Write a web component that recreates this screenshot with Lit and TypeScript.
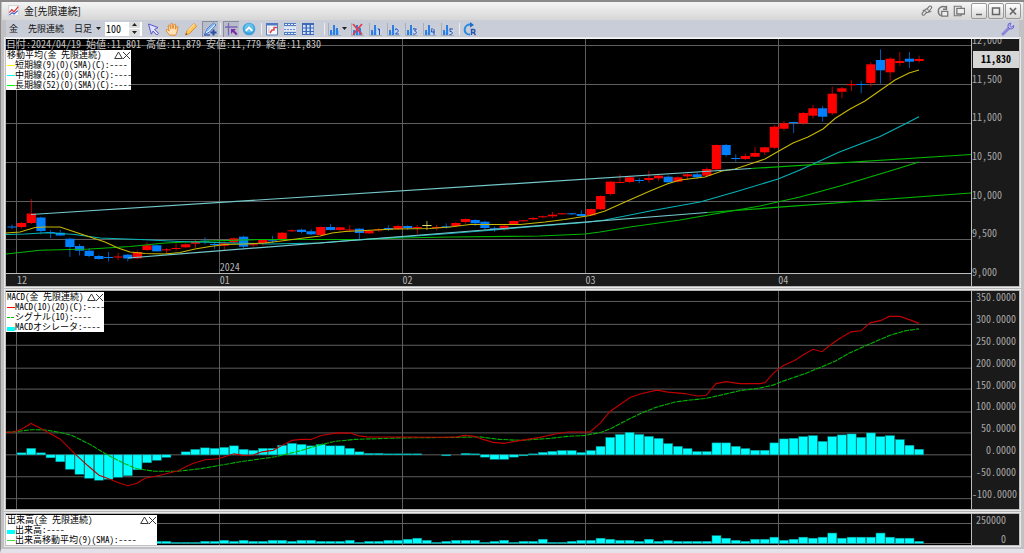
import { LitElement, html, svg, css } from "lit";
import { customElement, state } from "lit/decorators.js";

type Candle = [string, number, number, number, number];

const STEP = 9.65;
const FIRST = 12;
const slot = (i: number) => FIRST + STEP * i;

// colour, body top, body bottom, wick top, wick bottom
const CANDLES: Candle[] = [
  ["b", 226.5, 227.5, 224.5, 229], ["r", 223, 227, 222, 228.5], ["r", 213.5, 223, 199, 224],
  ["b", 217.5, 231, 216.7, 234.5], ["b", 232, 233, 230, 238], ["b", 232.7, 235.5, 230, 236],
  ["b", 238.7, 247, 237.7, 257], ["b", 246, 250.7, 244, 255.5], ["b", 250.7, 256, 248, 257],
  ["b", 256, 259, 254.7, 259.7], ["b", 257, 258, 252, 261.5], ["r", 256.5, 257.5, 252.7, 260],
  ["b", 254.7, 258.5, 254, 261.5], ["r", 252, 258.3, 250.7, 259], ["r", 245.3, 250, 242.3, 251],
  ["b", 245.3, 251.3, 245, 251.5], ["r", 249.3, 250.3, 248, 254], ["r", 248, 249, 243.5, 250.5],
  ["r", 244.3, 247.3, 243.3, 248.3], ["r", 241.7, 243.7, 240, 248], ["b", 240.7, 241.7, 237.3, 244.3],
  ["b", 244, 245, 242.5, 249], ["r", 243.3, 245.7, 241.3, 250], ["r", 238.3, 242.3, 237.3, 243.3],
  ["b", 236.7, 246.7, 235.7, 248.3], ["r", 244.3, 245.3, 242.7, 246.7], ["r", 240, 243, 239.3, 245.7],
  ["b", 240.3, 241.3, 235.7, 243.3], ["r", 232.7, 239, 232, 240], ["r", 230.3, 231.3, 229.3, 232],
  ["b", 229.7, 232, 228.7, 233.3], ["b", 231.3, 234.3, 229.3, 235], ["r", 227, 235, 226.5, 235.7],
  ["b", 227, 230, 224, 230.5], ["r", 227.3, 230, 227, 231.7], ["r", 229.5, 230.5, 225.3, 231.7],
  ["b", 228.7, 233, 228, 239], ["r", 230.7, 233.3, 230, 234], ["r", 229.3, 230.3, 228.3, 231.7],
  ["b", 228, 229.7, 225.3, 231], ["r", 226, 229, 224.7, 230], ["b", 226, 228, 225.3, 230],
  ["r", 227, 228, 225, 233.7], ["y", 225, 226, 221, 230], ["r", 227, 228, 225, 230],
  ["b", 226.3, 227.3, 223.3, 228.7], ["r", 223, 226, 222, 227.3], ["r", 219, 222, 218.5, 223.5],
  ["b", 220, 223.3, 219.3, 226], ["b", 221.7, 228, 220.7, 230], ["b", 228.3, 229.3, 226.7, 231.7],
  ["r", 225.7, 229.3, 224.7, 231.3], ["r", 221, 224.7, 220.5, 225], ["r", 220.3, 221.3, 220, 221.5],
  ["r", 218, 219.3, 217, 220], ["r", 216.3, 217.3, 215.5, 218], ["r", 214.7, 216.3, 212, 218],
  ["r", 213.3, 214.3, 213, 214.5], ["b", 213.3, 214.3, 213, 215], ["b", 214, 216, 210.3, 216.7],
  ["r", 209, 215.3, 208.5, 215.5], ["r", 196, 209.3, 195.5, 210], ["r", 181.7, 194, 181, 195.5],
  ["r", 182, 183, 174.3, 183.3], ["r", 177.3, 182, 176.7, 183], ["b", 180, 181, 178.3, 183.3],
  ["r", 178, 180, 171, 182.7], ["r", 175.7, 178.3, 175, 180.7], ["b", 176.7, 182.3, 175.3, 183.3],
  ["r", 177.3, 181.7, 176.5, 182.5], ["r", 174.3, 176.3, 173.5, 180], ["b", 174.3, 177.3, 172.7, 179],
  ["r", 169, 175.7, 167.3, 176], ["r", 145, 169.3, 144.5, 170], ["b", 145, 155, 144, 156.7],
  ["b", 158, 159, 154.3, 161.7], ["r", 156, 159, 153.7, 160], ["r", 153, 156.7, 147, 157],
  ["r", 147.3, 152.3, 146.7, 155], ["r", 126.7, 147.7, 125, 149.3], ["r", 123.3, 128.7, 121, 130.7],
  ["b", 122, 123, 121.7, 133], ["r", 113, 123.3, 112, 125], ["r", 108.3, 115.7, 105, 118.3],
  ["b", 108.3, 116.7, 106, 121.7], ["r", 93.7, 113.3, 86.7, 115], ["r", 88.3, 91.7, 87, 98.3],
  ["r", 84, 85.3, 80.3, 91], ["b", 84, 85, 81.3, 93.3], ["r", 64.3, 83, 62, 86.7],
  ["b", 60, 70.3, 49.3, 83.7], ["r", 58.7, 72.3, 57.3, 80.7], ["r", 61, 63, 52, 66],
  ["b", 58.7, 61.7, 52, 68], ["r", 59, 61, 55.7, 62.5],
];

const OSC_ZERO = 455.5;
const OSC: number[] = [
  0, 2, 6.5, 2, -3, -7, -14.5, -19.5, -23.5, -25.5, -24.5, -22.5, -21, -15, -8, -5.5, -2.5, 0,
  3, 5.5, 7, 6.5, 7.5, 9, 5.5, 4.5, 6.5, 6.5, 9.5, 11.5, 10.5, 9, 10.5, 9, 9, 6.5, 3, 1.5, 1.5,
  1, 1, 1, 1, 0, 0, -1, 0, 1.5, 1, -2.3, -4.5, -4.5, -2.3, -1, 1, 2.5, 3.5, 4.3, 4.3, 2.3, 4.3,
  8.5, 17.5, 20.5, 22.5, 20.5, 18.5, 16.5, 11.3, 8.5, 6.3, 3.3, 3.3, 12, 12, 8.5, 6.3, 4.6, 4.6,
  12, 16, 16.6, 18.3, 19.3, 13.5, 18.3, 20, 21, 17.6, 22, 18.3, 19.3, 15.3, 9.6, 5.6,
];

const VOL_ZERO = 543.5;
const VOL: number[] = [
  2, 3, 4, 3, 3, 2, 4, 3, 3, 3, 2, 3, 3, 3, 2, 2, 2, 1, 1, 1, 2, 2, 3, 2, 3, 2, 2, 3, 3, 2, 3, 3,
  2, 2, 2, 3, 1, 2, 2, 3, 3, 4, 5, 3, 1, 2, 3, 3, 3, 1, 2, 3, 1, 2, 2, 4, 1, 1, 2, 3, 3, 5, 4, 3,
  3, 2, 4, 2, 3, 2, 2, 2, 2, 7.5, 5, 3, 2, 4, 4, 6, 3, 4, 6, 5, 6, 10, 5, 6, 6, 6, 10, 6, 5, 5, 2,
];

const MA_SHORT =
  "6,233 20,232 35,227.5 45,227 60,227 72,231 90,237 105,242 118,248 130,252 145,253.5 165,254 180,252.5 195,249 210,246.5 225,244.5 245,244 265,243 285,240.5 300,238.5 320,236 332,233 345,231.5 365,230.5 395,229 430,228.5 450,227 470,224.5 520,224.5 545,222 565,219.5 590,215.5 605,211 625,202 650,191 667,184 680,180 697,178 705,177 722,171 735,169 750,164 765,159 778,151.5 793,143 808,137 823,129 835,118.5 850,109 865,101 880,90.5 895,80 909,73 919,70";
const MA_MID =
  "6,234.5 25,234 45,232.7 60,233.5 75,234.5 100,238 140,239.5 180,241.5 215,242.5 270,244 320,243 350,240.5 380,238.5 402,237 450,233.5 500,229.5 540,226 585,222.5 605,220 650,211 700,202 735,192 778,179 800,170 840,151.7 880,136.5 905,124 919,116.7";
const MA_LONG =
  "6,254 20,252.5 40,250.3 90,249 130,246.5 165,243 210,241 260,239.5 360,239.5 400,238 450,237 540,236 585,234 600,232 630,227 680,220 720,213 760,206 800,197 840,186 890,171 919,162";
const MACD =
  "6,433 14,432.5 22,429.5 31,424 41,429 60,439.5 76,455.5 88,466.5 99,476 110,480 120,484 128,486.5 137,484 145,479 160,476 178,471.5 192,464.5 205,460.5 218,459.5 234,454.5 243,456 253,455.7 262,452.5 273,451 283,445.5 292,441 301,440 311,440 321,436 337,433.5 351,433.7 359,436.5 367,437.5 440,437.8 457,437.5 465,436 475,437 483,440 493,443 504,444 515,442 540,438 555,434.5 568,432.5 590,432.5 600,424 610,412 630,398 640,394.5 657,390.5 668,392.5 685,394 697,396.5 706,396 716,384 726,382 740,384 760,384 765,383 774,373 783,366 795,360.5 805,354 813,349.5 822,352 832,344 840,338.5 851,332 861,331 870,323 881,320.5 889,316.5 900,316.5 910,320 919,323.5";
const SIGNAL =
  "6,433 18,432 31,430.3 45,430.5 60,433 72,436 90,445 108,456 125,464.5 137,469.5 155,472 178,472 200,469.5 220,466 240,462.5 275,457.5 300,451.5 320,445.5 335,442 355,440 400,438.5 455,438 480,437.5 500,440 520,441 550,439 567,437 585,436 601,433 612,428.5 630,419 645,412 657,407.5 675,402.5 690,400.5 705,399 730,393.5 740,391 757,389 773,385.5 783,381.5 805,374 822,367 835,361.5 850,353 870,344 890,335.5 905,331 919,329";

const MONTHS_X = [16.5, 219.5, 402.5, 585.5, 778.5];
const PRICE_Y = [45.5, 84.5, 123.5, 162.5, 201.5, 239.5];
const MACD_Y = [301.5, 324.5, 345.5, 368.5, 389.5, 412.5, 433.5, 455.5, 477.5, 499.5];

const PRICES = ["12,000", "11,500", "11,000", "10,500", "10,000", "9,500", "9,000"];
const LEVELS = [
  "350.0000", "300.0000", "250.0000", "200.0000", "150.0000",
  "100.0000", "50.0000", "0.0000", "-50.0000", "-100.0000",
];

const gridLines = (ys: number[], top: number, bottom: number) => svg`
  ${ys.map((y) => svg`<line class="grid" x1="6" x2="971" y1=${y} y2=${y}></line>`)}
  ${MONTHS_X.map((x) => svg`<line class="grid" x1=${x} x2=${x} y1=${top} y2=${bottom}></line>`)}`;

const barsBehind = (badge: unknown) => svg`
  <path d="M1.5 1v12.5H14" fill="none" stroke="#a9adb5"></path>
  <path d="M3 8h2v5H3zM6 3h2v10H6zM9 6h2v7H9z" fill="#2f7fe0"></path>
  <path d="M5 10h1v3H5zM8 7h1v6H8zM11 9h1v4h-1z" fill="#8cc0f6"></path>${badge}`;

const chartBadge = (path: string) =>
  barsBehind(svg`<path d="M8.500 6.500h5.500v6.500H8.500z" fill="#c6d6ee"></path><path d=${path} fill="none" stroke="#2c4ea0"></path>`);

const ICONS: Record<string, unknown> = {
  pointer: svg`<path d="M2.5 2 12 5.5 8.6 7.4 12.5 11.3 10.8 13 7 9.1 5.3 12.2z" fill="#dfe3ff" stroke="#5a55c8"></path>`,
  hand: svg`<path d="M4.6 13.2C3.4 11.4 1.2 9.3 1.2 8.2c0-.9 1.2-1 1.900-.2l1 1.1L3.2 4c-.2-1.200 1.200-1.500 1.600-.4l1 3.200.1-4.600c0-1.200 1.600-1.200 1.700 0l.3 4.500L9.100 2.700c.3-1.100 1.700-.8 1.600.3l-.4 4.300 1.200-2.500c.5-1 1.700-.5 1.400.6-.6 2.400-.9 5.600-2.300 7.800z" fill="#ffe2b8" stroke="#e0892e"></path>`,
  pencil: svg`<path d="m1.500 13 1.300-4L10 1.500 12.700 4 5.500 11.600z" fill="#ffc45c" stroke="#dc9130"></path><path d="m1.500 13 .6-2 1.300 1.300z" fill="#604020"></path><path d="m4 8.500 6.500-6.600" stroke="#fff0c0"></path>`,
  draw: svg`<path d="M1.500 12.500 4 7l6.500-6 2.500 2-6.500 7z" fill="#dcecff" stroke="#3f78d0"></path><path d="M4 9 11 2" stroke="#7eb0ee" stroke-width="1.500"></path><path d="M1 13h6" stroke="#2a55b0" stroke-width="1.300" fill="none"></path><path d="M10.500 7.500v6M7.500 10.500h6" stroke="#2a4fa8" stroke-width="2"></path>`,
  cross: svg`<path d="M1 5h12.500M4.500 1v12.500" stroke="#7a66b8" stroke-width="1.300"></path><path d="M7 7h5L10.400 8.600 13.500 11.700 12 13.200 8.800 10 7 12z" fill="#7a2fa8"></path>`,
  up: svg`<circle cx="7" cy="7" r="6.300" fill="#3fa2dc"></circle><circle cx="7" cy="6" r="4.600" fill="#66c0ee"></circle><path d="M3.600 8.800 7 5.600l3.400 3.200" fill="none" stroke="#fff" stroke-width="1.800"></path>`,
  newchart: svg`<path d="M1.500 1.500h11v11.500h-11z" fill="#f4f8ff" stroke="#5a7cb8"></path><path d="M1 1h12v2.500H1z" fill="#4f78c0"></path><path d="M5 11 7 8h2V5.500h3" fill="none" stroke="#e04848" stroke-width="1.500"></path><path d="M4 5v6" stroke="#e8b0b0"></path>`,
  rows: svg`<path d="M1 1h12v3H1zM1 10h12v3H1z" fill="#4f7cc2"></path><path d="M1 4.500h12v5H1z" fill="#dfe9f8"></path><path d="M2 2.500h11M2 11.500h11" stroke="#e6f0ff" stroke-dasharray="2 1"></path><path d="M1 7.500h12" stroke="#6b8cc4" stroke-dasharray="2 1"></path>`,
  table: svg`<path d="M1 1h12v12H1z" fill="#3f68b8"></path><path d="M2 3h2.500v2.500H2zM6 3h2.500v2.500H6zM10 3h2.500v2.500H10zM2 6.500h2.500V9H2zM6 6.500h2.500V9H6zM10 6.500h2.500V9H10zM2 10h2.500v2H2zM6 10h2.500v2H6zM10 10h2.500v2H10z" fill="#cfe2fb"></path>`,
  bars: barsBehind(null),
  barsx: barsBehind(svg`<path d="m3 2 9 10.500M12 2 3 12.500" stroke="#e03c4c" stroke-width="1.700"></path>`),
  bars1: chartBadge("M10 8l1.500-1v6"),
  bars2: chartBadge("M9 8c2-2 4 0 3 1.500L9.500 12H13"),
  bars3: chartBadge("M9 7h3.500L10.500 9c3 0 2.500 4-1.500 3"),
  bars4: chartBadge("M10 6.500 9.500 10H13M12 7v6"),
  bars5: chartBadge("M13 7h-3v2.500c3-.5 3.500 3.500-.5 3"),
  refresh: svg`<path d="M7 12.600A5 5 0 1 1 8 2.800" fill="none" stroke="#2a8ae0" stroke-width="2"></path><path d="M7 0v5.600L11 3z" fill="#1c6cc8"></path><path d="M8.500 13V7.500h2a1.500 1.500 0 0 1 0 3h-2M10.500 10.500l2 2.500" fill="none" stroke="#2858b0" stroke-width="1.400"></path>`,
  wrench: svg`<path d="m2 12 6-6" stroke="#8a86dc" stroke-width="3" stroke-linecap="round"></path><path d="M12.800 3.500A3 3 0 1 1 9.800 1L9 3.600 10.500 5z" fill="#b9b6f4" stroke="#6a66cc"></path>`,
  link: svg`<g fill="none" stroke="#777" stroke-width="1.300"><path d="M6.500 8.500 4 11.500c-1.500 1.200-3.500-.5-2.300-2.300L5.500 5c1.500-1 3 0 3 1.500M7 4.500l2.800-3c1.700-1 3.400.7 2.300 2.300L8.500 8.500c-1.500 1-3 .2-3-1.500M2 6.500l4-1M8 8.500l4-1"></path></g>`,
  undock: svg`<path d="M10.500 2.500C6 .5 1.500 3 1.500 7s2 5 3 5.500M11 1v4H7" fill="none" stroke="#777" stroke-width="1.700"></path><path d="M5.500 7.500h7V13h-7z" fill="#eee" stroke="#777" stroke-width="1.500"></path>`,
  window: svg`<path d="M1.500 1.500h8v11h-8z" fill="none" stroke="#777" stroke-width="1.300"></path><path d="M4.500 4h9v6.500h-9z" fill="#eee" stroke="#777" stroke-width="1.500"></path>`,
  min: svg`<path d="M4 10.500h6" stroke="#666" stroke-width="1.500"></path>`,
  max: svg`<path d="M3.500 4h7v6.500h-7z" fill="none" stroke="#666" stroke-width="1.500"></path>`,
  close: svg`<path d="m4 4 6 6.500M10 4l-6 6.500" stroke="#666" stroke-width="1.700"></path>`,
  app: svg`<path d="M.5.500h12v12H.5z" fill="#f8f8fa" stroke="#c9c9d2"></path><path d="M1.500 9 4.500 5.500 7 8l5-6" fill="none" stroke="#e03030" stroke-width="1.400"></path><path d="M1.500 11.500 5 9l2 1.500 4.500-4" fill="none" stroke="#4060c8" stroke-width="1.200"></path>`,
};

const icon = (name: string) => html`<svg class="icon" viewBox="0 0 14 14" aria-hidden="true">${ICONS[name]}</svg>`;

const KEYS: Record<string, string> = {
  line: "M0 4h8v1H0z",
  dash: "M0 4h3v1H0zM4 4h3v1H4z",
  bar: "M0 4h8v4H0z",
};

@customElement("app-root")
export class AppRoot extends LitElement {
  static styles = css`
    :host {
      display: block;
      height: 100vh;
      min-height: 320px;
      font-family: "Noto Sans CJK JP", sans-serif;
      font-size: 10px;
      line-height: 12px;
      color: #111;
    }
    * { box-sizing: border-box; }
    .window {
      height: 100%;
      display: flex;
      flex-direction: column;
      padding: 0 5px 4px;
      background: #c1c1c3;
      border-top: 2px solid #8a8889;
      border-left: 1px solid #8a8889;
      border-bottom: 4px solid #e3e2ea;
      overflow: hidden;
    }
    button {
      display: inline-flex;
      align-items: center;
      justify-content: center;
      width: 16px;
      height: 16px;
      padding: 0;
      border: 0;
      background: none;
      font: inherit;
    }
    .icon { width: 14px; height: 14px; display: block; flex: none; }
    .titlebar {
      flex: none;
      height: 18px;
      margin: 0 -4px;
      padding: 0 2px 0 6px;
      display: flex;
      align-items: center;
      gap: 4px;
      background: linear-gradient(#f4f4f4, #d6d6d6);
    }
    h1 { margin: 0; font-size: 10px; font-weight: 400; flex: 1; }
    .titlebar .icon { width: 12px; height: 12px; }
    .framed {
      width: 16px;
      height: 16px;
      border: 1px solid #999;
      border-radius: 2px;
      background: linear-gradient(#fff, #d8d8d8);
    }
    .framed .icon { width: 14px; height: 14px; }
    .tools, .winbuttons { display: flex; align-items: center; }
    .winbuttons { gap: 1px; }
    .toolbar {
      flex: none;
      height: 17px;
      padding: 0 3px;
      display: flex;
      align-items: center;
      font-size: 9px;
      background: #c9cdd8;
    }
    .label { margin-right: 10px; }
    .period {
      appearance: none;
      border: 0;
      background: none;
      font: inherit;
      color: inherit;
      padding: 0;
      width: 22px;
    }
    .caret { width: 5px; height: 3px; display: block; flex: none; }
    .count {
      display: flex;
      width: 37px;
      height: 14px;
      margin: 0 3px 0 4px;
      background: #fff;
    }
    .count input {
      width: 24px;
      border: 0;
      padding: 0 0 0 1px;
      background: none;
      font: inherit;
      font-size: 10px;
      font-feature-settings: "hwid";
      appearance: textfield;
    }
    .count input::-webkit-inner-spin-button { display: none; }
    .spin { display: flex; flex-direction: column; gap: 1px; width: 12px; }
    .spin button { width: 11px; height: 7px; background: #dcdcdc; border-radius: 1px; }
    .group { display: flex; gap: 2px; align-items: center; margin-right: 2px; }
    .group.first { gap: 3px; margin-right: 0; }
    .group.wide { margin-right: 6px; }
    .sep { width: 1px; height: 12px; margin: 0 2px; background: #eceef4; }
    .pressed { background: #b9bdca; box-shadow: inset 1px 1px #8b8e99; }
    .menu { width: 20px; gap: 1px; }
    .spring { flex: 1; }

    .panels {
      flex: 1;
      min-height: 0;
      display: grid;
      grid-template-rows: 248fr 219fr 31fr;
      row-gap: 5px;
      border-top: 2px solid #f4f6fa;
      background: #b4b4b4;
    }
    .panel {
      position: relative;
      min-height: 0;
      display: grid;
      grid-template-columns: minmax(0, 1fr) 47px;
      outline: 1px solid #e9e9ea;
      outline-offset: 1px;
    }
    .plot {
      position: relative;
      min-height: 0;
      min-width: 0;
      display: flex;
      flex-direction: column;
      background: #000;
      border-right: 1px solid #bdbdbd;
      font-feature-settings: "hwid";
    }
    .chart { display: block; width: 100%; flex: 1; min-height: 0; }
    .grid { stroke: #5e5e5e; stroke-width: 1; shape-rendering: crispEdges; }
    .line { fill: none; stroke-width: 1.1; }
    .short { stroke: #c8b800; }
    .mid { stroke: #00b4b8; }
    .long { stroke: #00b800; }
    .trend { stroke: #74c8cc; stroke-width: 1.2; }
    .extend { stroke: #00b800; stroke-width: 1.2; }
    .macd { stroke: #c00000; }
    .signal { stroke: #00b400; stroke-dasharray: 5 1; }
    .r { fill: #ff0000; stroke: #ff0000; }
    .b { fill: #0080ff; stroke: #0080ff; }
    .y { fill: #e4e46a; stroke: #e4e46a; }
    .wick { stroke-width: 1; opacity: 0.7; }
    .body { stroke: none; }
    .bar { fill: #00ffff; stroke: #008a8a; stroke-width: 0.5; }
    .months {
      flex: none;
      height: 13px;
      display: grid;
      grid-template-columns: 11fr 203fr 183fr 183fr 193fr 193fr;
      background: #1a1a1a;
      border-top: 1px solid #bdbdbd;
      color: #b4b4b4;
    }
    .month { position: relative; }
    .year { position: absolute; left: 0; top: -13px; }
    .axis {
      min-height: 0;
      overflow: hidden;
      background: #1a1a1a;
      color: #a8a8a8;
      font-feature-settings: "hwid";
    }
    .scale {
      margin: 0;
      padding: 0;
      list-style: none;
      height: 100%;
      display: flex;
      flex-direction: column;
      justify-content: space-between;
    }
    .prices { margin-top: -5px; padding-bottom: 8px; height: calc(100% + 5px); }
    .levels { padding: 0 3px 9px 0; text-align: right; }
    .volumes { padding-right: 13px; text-align: right; }
    .last {
      position: absolute;
      right: 0;
      top: 12px;
      width: 46px;
      height: 17px;
      line-height: 15px;
      padding-right: 8px;
      text-align: right;
      background: #d6d6d6;
      color: #000;
      font-weight: 700;
      font-feature-settings: "hwid";
    }
    .info { position: absolute; left: 0; top: 0; line-height: 10px; color: #c8c8c8; white-space: nowrap; }
    .legend {
      position: absolute;
      left: 0;
      top: 1px;
      padding: 0 1px;
      background: #fff;
      color: #000;
      font-size: 9px;
      line-height: 10px;
      white-space: nowrap;
      width: 98px;
    }
    .legend.price { top: 11px; width: 125px; }
    .legend.volume { width: 151px; }
    .legend header { display: flex; justify-content: space-between; }
    .legend ul { margin: 0; padding: 0; list-style: none; }
    .legend li { display: flex; align-items: center; }
    .legend button { width: 8px; height: 10px; }
    .legend button svg { width: 9px; height: 9px; flex: none; }
    .actions { display: flex; }
    .key { width: 8px; height: 8px; flex: none; }
  `;

  @state() private count = 100;

  private tool(name: string, label: string, extra = "") {
    return html`<button class=${extra} aria-label=${label} title=${label}>${icon(name)}</button>`;
  }

  private legend(kind: string, title: string, items: [string, string, string][]) {
    return html`<section class="legend ${kind}">
      <header>
        <span>${title}</span>
        <span class="actions">
          <button aria-label="折りたたむ"><svg viewBox="0 0 9 9"><path d="M.7 7.500h7.600L4.500 1z" fill="none" stroke="#222" stroke-width=".9"></path></svg></button>
          <button aria-label="閉じる"><svg viewBox="0 0 9 9"><path d="m1 1 7 7M8 1 1 8" stroke="#222" stroke-width=".9"></path></svg></button>
        </span>
      </header>
      <ul>
        ${items.map(([shape, color, text]) => html`<li>
          <svg class="key" viewBox="0 0 8 8" aria-hidden="true"><path d=${KEYS[shape]} fill=${color}></path></svg>
          <span>${text}</span>
        </li>`)}
      </ul>
    </section>`;
  }

  private bars(values: number[], zero: number) {
    return values.map((v, i) =>
      v === 0
        ? null
        : svg`<rect class="bar" x=${(slot(i) - 4.5).toFixed(1)} width="9" y=${v > 0 ? zero - v : zero} height=${Math.abs(v)}></rect>`);
  }

  render() {
    return html`
      <main class="window">
        <div class="titlebar">
          ${icon("app")}
          <h1>金[先限連続]</h1>
          <div class="tools">
            ${this.tool("link", "連動")}${this.tool("undock", "切り離す")}${this.tool("window", "複製")}
          </div>
          <div class="winbuttons">
            ${this.tool("min", "最小化", "framed")}${this.tool("max", "最大化", "framed")}${this.tool("close", "閉じる", "framed")}
          </div>
        </div>

        <div class="toolbar">
          <span class="label">金</span>
          <span class="label">先限連続</span>
          <select class="period" aria-label="足種"><option>日足</option></select>
          <svg class="caret" viewBox="0 0 5 3" aria-hidden="true"><path d="M0 0h5L2.500 3z" fill="#222"></path></svg>
          <div class="count">
            <input type="number" aria-label="表示本数" .value=${String(this.count)}
              @change=${(e: Event) => (this.count = Number((e.target as HTMLInputElement).value))} />
            <span class="spin">
              <button aria-label="増やす" @click=${() => this.count++}><svg class="caret" viewBox="0 0 5 3"><path d="M0 3h5L2.500 0z" fill="#222"></path></svg></button>
              <button aria-label="減らす" @click=${() => this.count--}><svg class="caret" viewBox="0 0 5 3"><path d="M0 0h5L2.500 3z" fill="#222"></path></svg></button>
            </span>
          </div>
          <div class="group first">
            ${this.tool("pointer", "選択")}${this.tool("hand", "移動")}${this.tool("pencil", "描画")}${this.tool("draw", "ライン", "pressed")}
          </div>
          <span class="sep"></span>
          <div class="group">${this.tool("cross", "十字線", "pressed")}${this.tool("up", "上へ")}</div>
          <span class="sep"></span>
          <div class="group wide">
            ${this.tool("newchart", "チャート")}${this.tool("rows", "リスト")}${this.tool("table", "表")}
          </div>
          <span class="sep"></span>
          <div class="group">
            <button class="menu" aria-label="テクニカル">${icon("bars")}<svg class="caret" viewBox="0 0 5 3"><path d="M0 0h5L2.500 3z" fill="#222"></path></svg></button>
            ${this.tool("barsx", "削除")}${this.tool("bars1", "設定1")}${this.tool("bars2", "設定2")}
            ${this.tool("bars3", "設定3")}${this.tool("bars4", "設定4")}${this.tool("bars5", "設定5")}
          </div>
          <span class="sep"></span>
          ${this.tool("refresh", "更新")}
          <span class="spring"></span>
          ${this.tool("wrench", "設定")}
        </div>

        <div class="panels">
          <section class="panel">
            <div class="plot">
              <svg class="chart" viewBox="6 39 965 234" preserveAspectRatio="none" role="img" aria-label="価格チャート">
                ${gridLines(PRICE_Y, 39, 273)}
                ${CANDLES.map(([c, t, b, hi, lo], i) => svg`
                  <line class="wick ${c}" x1=${slot(i)} x2=${slot(i)} y1=${hi} y2=${lo}></line>
                  <rect class="body ${c}" x=${slot(i) - 4.6} y=${t} width="9.2" height=${b - t}></rect>`)}
                <polyline class="line long" points=${MA_LONG}></polyline>
                <polyline class="line mid" points=${MA_MID}></polyline>
                <polyline class="line short" points=${MA_SHORT}></polyline>
                <line class="trend" x1="31" y1="214.500" x2="751" y2="168.500"></line>
                <line class="extend" x1="751" y1="168.500" x2="971" y2="154.500"></line>
                <line class="trend" x1="128" y1="258" x2="707" y2="212.500"></line>
                <line class="extend" x1="707" y1="212.500" x2="971" y2="193"></line>
              </svg>
              <div class="months">
                <span></span>
                ${["12", "01", "02", "03", "04"].map((m) => html`<span class="month">${m === "01" ? html`<span class="year">2024</span>` : null}${m}</span>`)}
              </div>
              <div class="info">日付:2024/04/19 始値:11,801 高値:11,879 安値:11,779 終値:11,830</div>
              ${this.legend("price", "移動平均(金 先限連続)", [
                ["line", "#ffff00", "短期線(9)(0)(SMA)(C):----"],
                ["line", "#00ffff", "中期線(26)(0)(SMA)(C):----"],
                ["line", "#00ff00", "長期線(52)(0)(SMA)(C):----"],
              ])}
            </div>
            <div class="axis"><ul class="scale prices">${PRICES.map((p) => html`<li>${p}</li>`)}</ul></div>
            <output class="last">11,830</output>
          </section>

          <section class="panel">
            <div class="plot">
              <svg class="chart" viewBox="6 291 965 219" preserveAspectRatio="none" role="img" aria-label="MACD">
                ${gridLines(MACD_Y, 291, 510)}
                ${this.bars(OSC, OSC_ZERO)}
                <polyline class="line signal" points=${SIGNAL}></polyline>
                <polyline class="line macd" points=${MACD}></polyline>
              </svg>
              ${this.legend("osc", "MACD(金 先限連続)", [
                ["line", "#ff0000", "MACD(10)(20)(C):----"],
                ["dash", "#00c800", "シグナル(10):----"],
                ["bar", "#00ffff", "MACDオシレータ:----"],
              ])}
            </div>
            <div class="axis"><ul class="scale levels">${LEVELS.map((p) => html`<li>${p}</li>`)}</ul></div>
          </section>

          <section class="panel">
            <div class="plot">
              <svg class="chart" viewBox="6 515 965 30" preserveAspectRatio="none" role="img" aria-label="出来高">
                ${gridLines([524.5, 543.5], 515, 545)}
                ${this.bars(VOL, VOL_ZERO)}
              </svg>
              ${this.legend("volume", "出来高(金 先限連続)", [
                ["bar", "#00ffff", "出来高:----"],
                ["line", "#40e040", "出来高移動平均(9)(SMA):----"],
              ])}
            </div>
            <div class="axis"><ul class="scale volumes"><li>250000</li><li>0</li></ul></div>
          </section>
        </div>
      </main>
    `;
  }
}
